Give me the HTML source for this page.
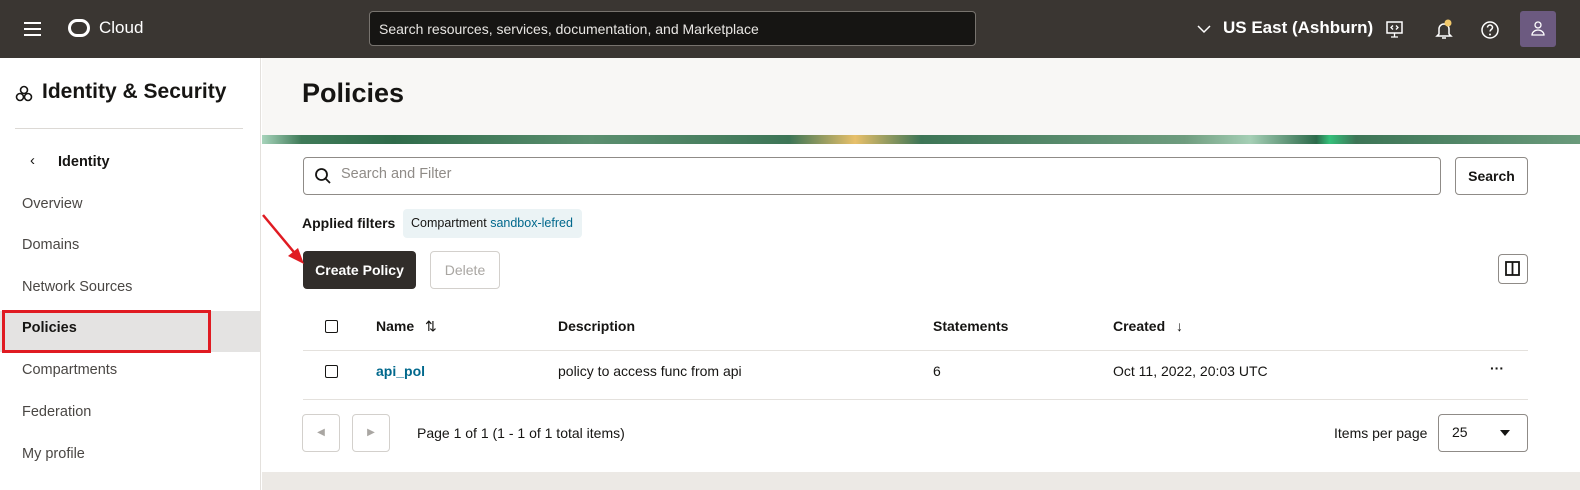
<!DOCTYPE html>
<html><head><meta charset="utf-8"><style>
*{box-sizing:border-box;margin:0;padding:0}
body{width:1580px;height:490px;overflow:hidden;font-family:"Liberation Sans",sans-serif;background:#fff;color:#161513;position:relative;font-size:14px}
.abs{position:absolute}
.top{left:0;top:0;width:1580px;height:58px;background:#3a3632}
.side{left:0;top:58px;width:261px;height:432px;background:#fff;border-right:1px solid #e4e1dd}
.nav{left:22px;font-size:14.5px;color:#4a4744}
.main{left:262px;top:58px;width:1318px;height:432px;background:#fff}
.btn{border:1px solid #8f8b87;border-radius:4px;background:#fff}
.th{top:318px;font-size:14px;font-weight:bold;color:#161513}
.td{top:363px;font-size:14px}
.cb{width:13px;height:13px;border:1.5px solid #161513;border-radius:2px}
</style></head><body>
<div class="abs top"></div>
<div class="abs" style="left:24px;top:22px;width:17px;height:2px;background:#fff;box-shadow:0 6px 0 #fff,0 12px 0 #fff"></div>
<div class="abs" style="left:68px;top:19px;width:22px;height:18px;border:3px solid #fff;border-radius:9px"></div>
<div class="abs" style="left:99px;top:18px;color:#fff;font-size:17px">Cloud</div>
<div class="abs" style="left:369px;top:11px;width:607px;height:35px;background:#161513;border:1px solid #77736e;border-radius:4px;color:#e8e6e3;font-size:14px;padding:9px 9px">Search resources, services, documentation, and Marketplace</div>
<svg class="abs" style="left:1196px;top:24px" width="16" height="10"><path d="M2 2l6 6 6-6" stroke="#fff" stroke-width="1.5" fill="none"/></svg>
<div class="abs" style="left:1223px;top:18px;color:#fff;font-size:17px;font-weight:bold">US East (Ashburn)</div>
<svg class="abs" style="left:1385px;top:20px" width="20" height="20"><rect x="2" y="2" width="15" height="11" stroke="#fff" stroke-width="1.5" fill="none"/><path d="M9.5 13v4M6 17h7M8 5.5l-2 2 2 2M11 5.5l2 2-2 2" stroke="#fff" stroke-width="1.3" fill="none"/></svg>
<svg class="abs" style="left:1434px;top:19px" width="22" height="22"><path d="M5 15V10a5 5 0 0110 0v5l2 2H3z M8 19h4" stroke="#fff" stroke-width="1.5" fill="none"/><circle cx="14" cy="4" r="3.5" fill="#f2c96b"/></svg>
<svg class="abs" style="left:1480px;top:20px" width="20" height="20"><circle cx="10" cy="10" r="8" stroke="#fff" stroke-width="1.5" fill="none"/><path d="M7.5 7.5a2.5 2.5 0 115 0c0 2-2.5 2-2.5 4" stroke="#fff" stroke-width="1.5" fill="none"/><circle cx="10" cy="14.5" r="1" fill="#fff"/></svg>
<div class="abs" style="left:1520px;top:11px;width:36px;height:36px;background:#6c5a80;border-radius:3px"></div>
<svg class="abs" style="left:1528px;top:19px" width="20" height="20"><circle cx="10" cy="6" r="3" stroke="#fff" stroke-width="1.3" fill="none"/><path d="M4 16a6 5 0 0112 0z" stroke="#fff" stroke-width="1.3" fill="none"/></svg>

<div class="abs side"></div>
<svg class="abs" style="left:15px;top:85px" width="18" height="18"><circle cx="9" cy="5" r="3.5" fill="none" stroke="#161513" stroke-width="1.6"/><circle cx="5" cy="12" r="3.5" fill="none" stroke="#161513" stroke-width="1.6"/><circle cx="13" cy="12" r="3.5" fill="none" stroke="#161513" stroke-width="1.6"/></svg>
<div class="abs" style="left:42px;top:80px;font-size:21px;font-weight:bold">Identity &amp; Security</div>
<div class="abs" style="left:15px;top:128px;width:228px;height:1px;background:#dcd9d5"></div>
<div class="abs" style="left:30px;top:152px;font-size:15px">‹</div>
<div class="abs" style="left:58px;top:154px;font-size:14.5px;font-weight:bold">Identity</div>
<div class="abs nav" style="top:196px">Overview</div>
<div class="abs nav" style="top:237px">Domains</div>
<div class="abs nav" style="top:279px">Network Sources</div>
<div class="abs" style="left:0;top:311px;width:260px;height:41px;background:#e4e3e2"></div>
<div class="abs" style="left:2px;top:310px;width:209px;height:43px;border:3px solid #e01b22"></div>
<div class="abs nav" style="top:320px;color:#161513;font-weight:bold">Policies</div>
<div class="abs nav" style="top:362px">Compartments</div>
<div class="abs nav" style="top:404px">Federation</div>
<div class="abs nav" style="top:446px">My profile</div>

<div class="abs main"></div>
<div class="abs" style="left:262px;top:58px;width:1318px;height:77px;background:#f8f7f5"></div>
<div class="abs" style="left:302px;top:78px;font-size:27px;font-weight:bold">Policies</div>
<div class="abs" style="left:262px;top:135px;width:1318px;height:9px;background:linear-gradient(90deg,#a7d4bb 0,#3f7a58 3%,#2f6b4a 10%,#5b8f6f 25%,#3d7556 40%,#e8c06a 45%,#3d7556 50%,#6e9c7e 70%,#a5cfb5 75%,#2c6a4a 80%,#35c07a 81%,#3d7556 83%,#6a9a7b 100%)"></div>
<div class="abs" style="left:262px;top:472px;width:1318px;height:18px;background:#ece9e5"></div>

<div class="abs btn" style="left:303px;top:157px;width:1138px;height:38px"></div>
<svg class="abs" style="left:314px;top:167px" width="18" height="18"><circle cx="7.5" cy="7.5" r="5.5" stroke="#161513" stroke-width="1.8" fill="none"/><path d="M11.5 11.5l4.5 4.5" stroke="#161513" stroke-width="1.8"/></svg>
<div class="abs" style="left:341px;top:166px;font-size:14.5px;color:#8f8b87">Search and Filter</div>
<div class="abs btn" style="left:1455px;top:157px;width:73px;height:38px;font-weight:bold;font-size:14px;text-align:center;line-height:36px">Search</div>

<div class="abs" style="left:302px;top:215px;font-size:14px;font-weight:bold">Applied filters</div>
<div class="abs" style="left:403px;top:209px;width:179px;height:29px;background:#ebf3f5;border-radius:4px;font-size:12.5px;padding:7px 8px">Compartment <span style="color:#00688c">sandbox-lefred</span></div>

<div class="abs" style="left:303px;top:251px;width:113px;height:38px;background:#312d2a;border-radius:4px;color:#fff;font-weight:bold;font-size:14px;text-align:center;line-height:38px">Create Policy</div>
<div class="abs" style="left:430px;top:251px;width:70px;height:38px;border:1px solid #d3d0cc;border-radius:4px;color:#a9a6a2;font-size:14px;text-align:center;line-height:36px">Delete</div>
<svg class="abs" style="left:258px;top:212px" width="50" height="55"><path d="M5 3L40 45" stroke="#e01b22" stroke-width="2.5"/><path d="M46 52L30 44l10-8z" fill="#e01b22"/></svg>
<div class="abs btn" style="left:1498px;top:254px;width:30px;height:30px"></div>
<svg class="abs" style="left:1505px;top:261px" width="16" height="16"><rect x="1" y="1" width="13" height="13" stroke="#161513" stroke-width="1.8" fill="none"/><path d="M7.5 1v13" stroke="#161513" stroke-width="1.8"/></svg>

<div class="abs cb" style="left:325px;top:320px"></div>
<div class="abs th" style="left:376px">Name</div>
<div class="abs th" style="left:425px;font-weight:normal">⇅</div>
<div class="abs th" style="left:558px">Description</div>
<div class="abs th" style="left:933px">Statements</div>
<div class="abs th" style="left:1113px">Created</div>
<div class="abs th" style="left:1176px;font-weight:normal">↓</div>
<div class="abs" style="left:303px;top:350px;width:1225px;height:1px;background:#e4e1dd"></div>
<div class="abs cb" style="left:325px;top:365px"></div>
<div class="abs td" style="left:376px;color:#00688c;font-weight:bold">api_pol</div>
<div class="abs td" style="left:558px">policy to access func from api</div>
<div class="abs td" style="left:933px">6</div>
<div class="abs td" style="left:1113px">Oct 11, 2022, 20:03 UTC</div>
<div class="abs td" style="left:1490px;top:360px;font-weight:bold">···</div>
<div class="abs" style="left:303px;top:399px;width:1225px;height:1px;background:#e4e1dd"></div>

<div class="abs" style="left:302px;top:414px;width:38px;height:38px;border:1px solid #d3d0cc;border-radius:4px;color:#a9a6a2;text-align:center;line-height:36px;font-size:10px">◀</div>
<div class="abs" style="left:352px;top:414px;width:38px;height:38px;border:1px solid #d3d0cc;border-radius:4px;color:#a9a6a2;text-align:center;line-height:36px;font-size:10px">▶</div>
<div class="abs" style="left:417px;top:425px;font-size:14px">Page 1 of 1 (1 - 1 of 1 total items)</div>
<div class="abs" style="left:1334px;top:425px;font-size:14px">Items per page</div>
<div class="abs btn" style="left:1438px;top:414px;width:90px;height:38px"></div>
<div class="abs" style="left:1452px;top:424px;font-size:14px">25</div>
<svg class="abs" style="left:1500px;top:430px" width="10" height="6"><path d="M0 0h10L5 6z" fill="#161513"/></svg>
</body></html>
